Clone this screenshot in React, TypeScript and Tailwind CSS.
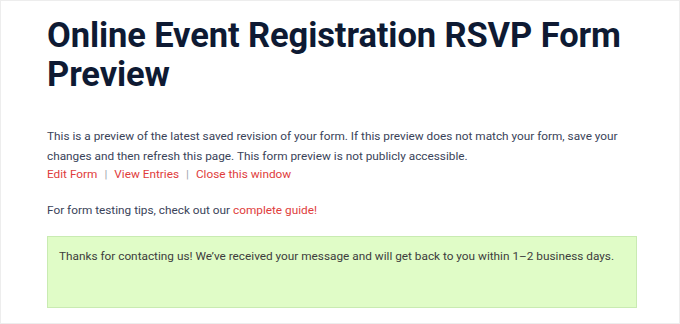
import React from 'react';

const App: React.FC = () => {
  return (
    <div
      className="h-[324px] w-[680px] overflow-hidden border border-[#ededed] bg-white"
      style={{ fontFamily: 'Roboto, "Noto Sans", sans-serif' }}
    >
      <div className="pl-[46px] pr-[40px] pt-[15px]">
        <h1 className="text-[34.5px] font-bold leading-[39px] tracking-[-0.1px] text-[#0e1a33]">
          Online Event Registration RSVP Form Preview
        </h1>

        <p className="mt-[32px] text-[11.8px] leading-[20px] text-[#3a4359]">
          This is a preview of the latest saved revision of your form. If this preview does not match your form, save your
          changes and then refresh this page. This form preview is not publicly accessible.
        </p>
        <div className="text-[11.8px] leading-[17px] text-[#e03c3c]">
          <a href="#">Edit Form</a>
          <span className="mx-[7px] text-[#a0a5ae]">|</span>
          <a href="#">View Entries</a>
          <span className="mx-[7px] text-[#a0a5ae]">|</span>
          <a href="#">Close this window</a>
        </div>

        <p className="mt-[18px] text-[11.8px] leading-[19px] text-[#3a4359]">
          For form testing tips, check out our <a href="#" className="text-[#e03c3c]">complete guide!</a>
        </p>

        <div className="mt-[16px] h-[72px] w-[590px] border border-[#c9ebb2] bg-[#e0fcc7] px-[11px] pt-[10px] text-[11.8px] leading-[19px] text-[#3d3d3d]">
          Thanks for contacting us! We’ve received your message and will get back to you within 1–2 business days.
        </div>
      </div>
    </div>
  );
};

export default App;
